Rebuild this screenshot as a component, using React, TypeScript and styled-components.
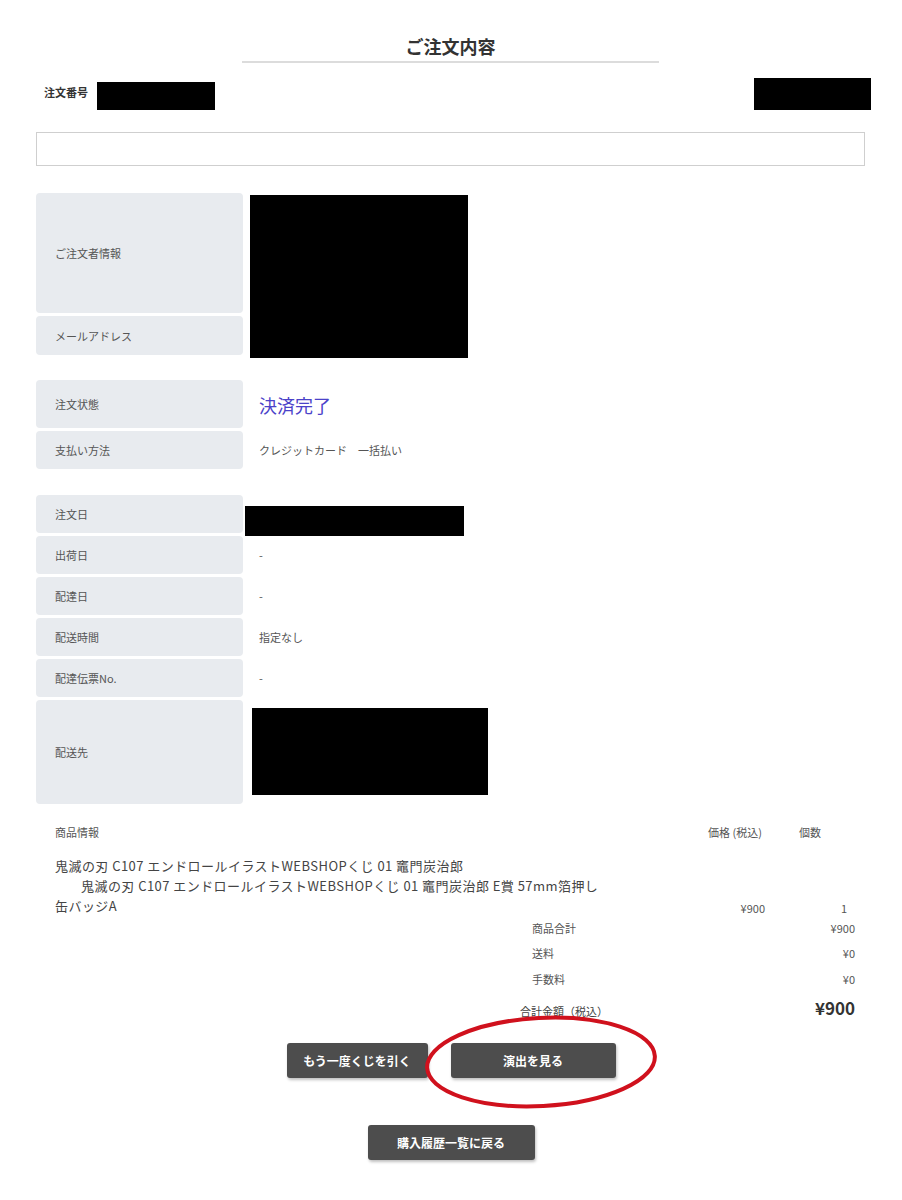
import React from "react";
import styled, { createGlobalStyle } from "styled-components";

const Global = createGlobalStyle`
  html, body { margin: 0; padding: 0; background: #fff; }
  body { font-family: "Noto Sans CJK JP", "Noto Sans", sans-serif; color: #333; }
`;

const Page = styled.div`
  position: relative;
  width: 902px;
  padding: 34px 37px 40px 36px;
  box-sizing: border-box;
`;

const Title = styled.h1`
  margin: 0 auto;
  width: 417px;
  font-size: 18px;
  line-height: 24px;
  font-weight: 700;
  text-align: center;
  color: #333;
  padding-bottom: 3px;
  border-bottom: 2px solid #dcdcdc;
`;

const HeaderRow = styled.div`
  display: flex;
  justify-content: space-between;
  align-items: center;
  margin-top: 15px;
  height: 32px;
`;

const OrderNo = styled.div`
  display: flex;
  align-items: center;
  font-size: 11px;
  font-weight: 700;
  color: #333;
  padding-left: 8px;
  margin-top: -4px;
`;

const Redact = styled.div<{ $w: number; $h: number }>`
  background: #000;
  width: ${(p) => p.$w}px;
  height: ${(p) => p.$h}px;
  flex-shrink: 0;
`;

const OrderRedact = styled(Redact)`
  margin-left: 9px;
  margin-top: 8px;
`;

const RightRedact = styled(Redact)`
  margin-right: -6px;
`;

const NoticeBox = styled.div`
  margin-top: 22px;
  height: 34px;
  box-sizing: border-box;
  border: 1px solid #cfcfcf;
`;

const InfoGrid = styled.div<{ $mt: number }>`
  display: grid;
  grid-template-columns: 207px 1fr;
  row-gap: 3px;
  margin-top: ${(p) => p.$mt}px;
`;

const Label = styled.div<{ $h: number }>`
  height: ${(p) => p.$h}px;
  background: #e8ebef;
  border-radius: 4px;
  display: flex;
  align-items: center;
  padding-left: 19px;
  font-size: 11px;
  color: #555;
`;

const Value = styled.div`
  display: flex;
  align-items: center;
  padding-left: 16px;
  font-size: 11px;
  color: #555;
`;

const BoxValue = styled.div<{ $span?: number; $ml: number; $mt: number }>`
  grid-row: span ${(p) => p.$span || 1};
  padding-left: ${(p) => p.$ml}px;
  padding-top: ${(p) => p.$mt}px;
`;

const OverRedact = styled(Redact)<{ $over: number }>`
  margin-bottom: -${(p) => p.$over}px;
`;

const Status = styled.span`
  font-size: 18px;
  color: #4b42c9;
  margin-top: 2px;
`;

const ProductTable = styled.div`
  display: grid;
  grid-template-columns: 1fr 89px 90px;
  margin-top: 18px;
  padding-left: 19px;
`;

const HeadCell = styled.div<{ $pl?: number }>`
  font-size: 11px;
  line-height: 20px;
  color: #555;
  padding-left: ${(p) => p.$pl || 0}px;
`;

const ItemName = styled.div`
  margin-top: 14px;
  font-size: 13px;
  line-height: 20px;
  letter-spacing: 0.45px;
  color: #444;
`;

const Indent = styled.span`
  padding-left: 26px;
`;

const ItemCell = styled.div<{ $pr?: number }>`
  align-self: end;
  font-size: 11px;
  line-height: 20px;
  color: #555;
  text-align: right;
  padding-right: ${(p) => p.$pr || 0}px;
  margin-bottom: -2px;
`;

const Summary = styled.div`
  width: 335px;
  margin: -1px 10px 0 auto;
  display: grid;
  grid-template-columns: 1fr auto;
  grid-auto-rows: 25.5px;
  align-items: center;
`;

const SumLabel = styled.div<{ $total?: boolean }>`
  font-size: 11px;
  color: ${(p) => (p.$total ? "#444" : "#555")};
  padding-left: ${(p) => (p.$total ? 0 : 12)}px;
  ${(p) => (p.$total ? "margin-top: 14px;" : "")}
`;

const SumValue = styled.div<{ $total?: boolean }>`
  font-size: ${(p) => (p.$total ? 17 : 11)}px;
  font-weight: ${(p) => (p.$total ? 700 : 400)};
  color: ${(p) => (p.$total ? "#333" : "#555")};
  text-align: right;
  ${(p) => (p.$total ? "margin-top: 6px;" : "")}
`;

const ButtonRow = styled.div<{ $mt: number }>`
  display: flex;
  justify-content: center;
  gap: 23px;
  margin-top: ${(p) => p.$mt}px;
  padding-left: 1px;
`;

const Button = styled.button<{ $w: number }>`
  width: ${(p) => p.$w}px;
  height: 35px;
  border: none;
  border-radius: 3px;
  background: #4d4d4d;
  color: #fff;
  font-family: "Noto Sans CJK JP", sans-serif;
  font-size: 12px;
  font-weight: 700;
  box-shadow: 1px 2px 3px rgba(0, 0, 0, 0.25);
  cursor: pointer;
`;

const Circle = styled.svg`
  position: absolute;
  left: 418px;
  top: 1010px;
  width: 250px;
  height: 104px;
  pointer-events: none;
`;

export default function App() {
  return (
    <Page>
      <Global />
      <Title>ご注文内容</Title>
      <HeaderRow>
        <OrderNo>
          注文番号
          <OrderRedact $w={118} $h={28} />
        </OrderNo>
        <RightRedact $w={117} $h={32} />
      </HeaderRow>
      <NoticeBox />

      <InfoGrid $mt={27}>
        <Label $h={120}>ご注文者情報</Label>
        <BoxValue $span={2} $ml={7} $mt={2}>
          <OverRedact $w={218} $h={163} $over={3} />
        </BoxValue>
        <Label $h={39}>メールアドレス</Label>
      </InfoGrid>

      <InfoGrid $mt={25}>
        <Label $h={48}>注文状態</Label>
        <Value>
          <Status>決済完了</Status>
        </Value>
        <Label $h={38}>支払い方法</Label>
        <Value>クレジットカード　一括払い</Value>
      </InfoGrid>

      <InfoGrid $mt={26}>
        <Label $h={38}>注文日</Label>
        <BoxValue $ml={2} $mt={11}>
          <OverRedact $w={219} $h={30} $over={3} />
        </BoxValue>
        <Label $h={38}>出荷日</Label>
        <Value>-</Value>
        <Label $h={38}>配達日</Label>
        <Value>-</Value>
        <Label $h={38}>配送時間</Label>
        <Value>指定なし</Value>
        <Label $h={38}>配達伝票No.</Label>
        <Value>-</Value>
        <Label $h={104}>配送先</Label>
        <BoxValue $ml={9} $mt={8}>
          <Redact $w={236} $h={87} />
        </BoxValue>
      </InfoGrid>

      <ProductTable>
        <HeadCell>商品情報</HeadCell>
        <HeadCell $pl={22}>価格 (税込)</HeadCell>
        <HeadCell $pl={24}>個数</HeadCell>
        <ItemName>
          鬼滅の刃 C107 エンドロールイラストWEBSHOPくじ 01 竈門炭治郎
          <br />
          <Indent>鬼滅の刃 C107 エンドロールイラストWEBSHOPくじ 01 竈門炭治郎 E賞 57mm箔押し</Indent>
          <br />
          缶バッジA
        </ItemName>
        <ItemCell $pr={10}>¥900</ItemCell>
        <ItemCell $pr={18}>1</ItemCell>
      </ProductTable>

      <Summary>
        <SumLabel>商品合計</SumLabel>
        <SumValue>¥900</SumValue>
        <SumLabel>送料</SumLabel>
        <SumValue>¥0</SumValue>
        <SumLabel>手数料</SumLabel>
        <SumValue>¥0</SumValue>
        <SumLabel $total>合計金額（税込）</SumLabel>
        <SumValue $total>¥900</SumValue>
      </Summary>

      <ButtonRow $mt={26}>
        <Button $w={141}>もう一度くじを引く</Button>
        <Button $w={165}>演出を見る</Button>
      </ButtonRow>
      <ButtonRow $mt={47}>
        <Button $w={167}>購入履歴一覧に戻る</Button>
      </ButtonRow>

      <Circle viewBox="0 0 250 104">
        <ellipse
          cx="123"
          cy="52"
          rx="114"
          ry="44"
          fill="none"
          stroke="#d0111d"
          strokeWidth="4"
          transform="rotate(-3 123 52)"
        />
      </Circle>
    </Page>
  );
}
